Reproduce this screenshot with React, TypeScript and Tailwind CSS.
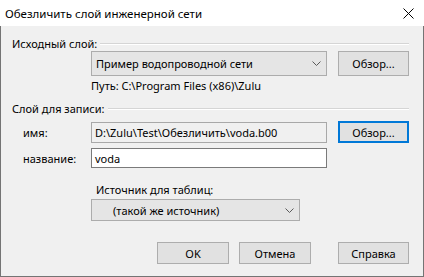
import React from "react";

const Chevron = () => (
  <svg width="9" height="5" viewBox="0 0 9 5" className="block">
    <path d="M0.5 0.5 L4.5 4.5 L8.5 0.5" fill="none" stroke="#5a5a5a" strokeWidth="1" />
  </svg>
);

const GroupHeader = ({ label }: { label: string }) => (
  <div className="flex items-center pl-[11px] pr-[14px] h-[15px]">
    <span className="leading-[15px]">{label}</span>
    <div className="flex-1 ml-[3px] flex flex-col">
      <div className="h-px bg-[#d5d5d5]" />
      <div className="h-px bg-white" />
    </div>
  </div>
);

const Btn = ({ label, w, focused }: { label: string; w: string; focused?: boolean }) => (
  <div
    className={`${w} h-[22px] flex items-center justify-center bg-[#e1e1e1] ${
      focused ? "border-2 border-[#0078d7]" : "border border-[#adadad]"
    }`}
  >
    {label}
  </div>
);

export default function App() {
  return (
    <div
      className="w-[424px] h-[277px] flex flex-col text-[11px] text-black leading-[15px]"
      style={{ fontFamily: '"Noto Sans", "Open Sans", sans-serif' }}
    >
      <div className="h-[26px] bg-white flex items-center pl-[5px] pr-[10px] shrink-0">
        <span className="flex-1 leading-[15px] mt-[1px] text-[11.5px]">Обезличить слой инженерной сети</span>
        <svg width="11" height="11" viewBox="0 0 11 11" className="block mt-[1px]">
          <path d="M0.5 0.5 L10.5 10.5 M10.5 0.5 L0.5 10.5" stroke="#000" strokeWidth="1" />
        </svg>
      </div>
      <div className="flex-1 bg-[#f0f0f0] border-l border-r border-b border-[#747474] flex flex-col">
        <div className="mt-[10px]">
          <GroupHeader label="Исходный слой:" />
        </div>
        <div className="flex pl-[90px]">
          <div className="w-[236px] h-[25px] bg-[#e5e5e5] border border-[#acacac] flex items-center pl-[4px] pr-[5px]">
            <span className="flex-1">Пример водопроводной сети</span>
            <Chevron />
          </div>
          <div className="ml-[11px]">
            <div className="w-[71px] h-[25px] flex items-center justify-center bg-[#e1e1e1] border border-[#adadad]">
              Обзор...
            </div>
          </div>
        </div>
        <div className="mt-[2px] pl-[90px] h-[15px]">Путь: C:\Program Files (x86)\Zulu</div>
        <div className="mt-[8px]">
          <GroupHeader label="Слой для записи:" />
        </div>
        <div className="flex items-center mt-[5px] pl-[22px]">
          <span className="w-[68px]">имя:</span>
          <div className="w-[236px] h-[21px] bg-[#f0f0f0] border border-[#a8a8a8] flex items-center pl-[3px]">
            D:\Zulu\Test\Обезличить\voda.b00
          </div>
          <div className="ml-[11px]">
            <Btn label="Обзор..." w="w-[71px]" focused />
          </div>
        </div>
        <div className="flex items-center mt-[5px] pl-[22px]">
          <span className="w-[68px]">название:</span>
          <div className="w-[236px] h-[20px] bg-white border border-[#7a7a7a] flex items-center pl-[3px]">
            voda
          </div>
        </div>
        <div className="mt-[14px] pl-[95px] h-[15px]">Источник для таблиц:</div>
        <div className="mt-[2px] pl-[90px] flex">
          <div className="w-[209px] h-[22px] bg-[#e5e5e5] border border-[#acacac] flex items-center pl-[21px] pr-[5px]">
            <span className="flex-1">(такой же источник)</span>
            <Chevron />
          </div>
        </div>
        <div className="mt-[21px] flex pl-[156px]">
          <Btn label="OK" w="w-[72px]" />
          <div className="ml-[10px]">
            <Btn label="Отмена" w="w-[72px]" />
          </div>
          <div className="ml-[27px]">
            <Btn label="Справка" w="w-[71px]" />
          </div>
        </div>
      </div>
    </div>
  );
}
